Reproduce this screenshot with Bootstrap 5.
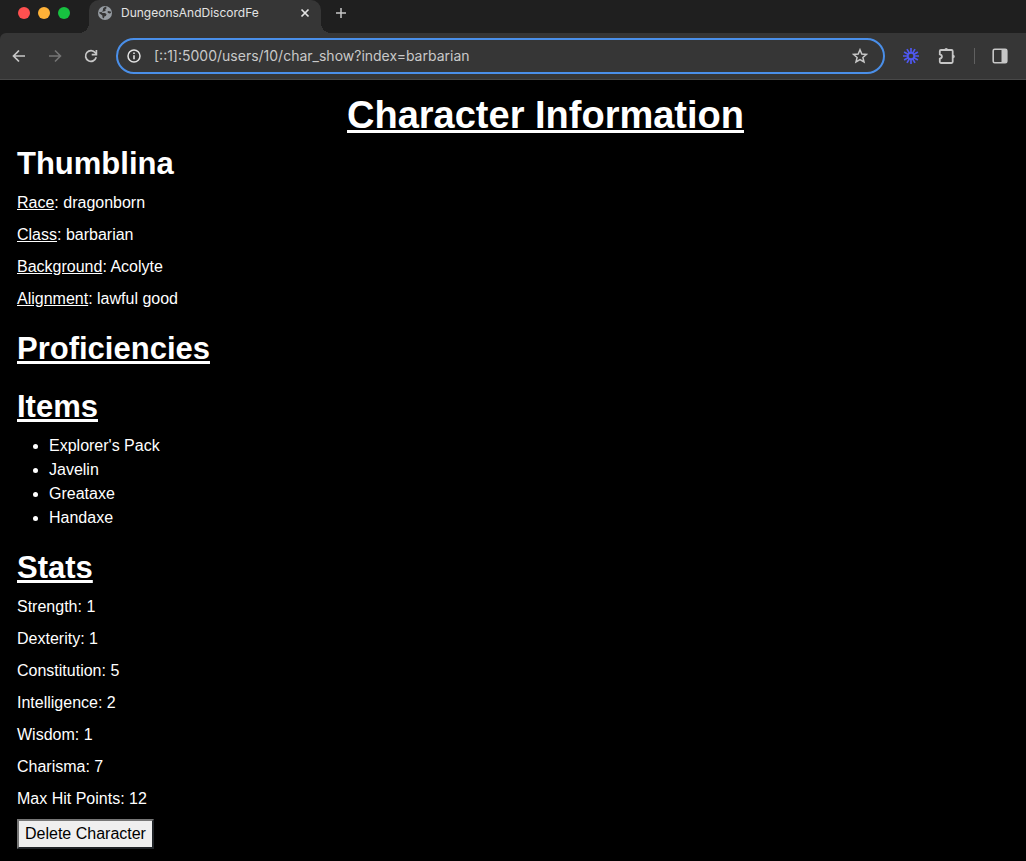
<!DOCTYPE html>
<html lang="en">
<head>
<meta charset="utf-8">
<meta name="viewport" content="width=device-width, initial-scale=1">
<title>DungeonsAndDiscordFe</title>
<link href="https://cdn.jsdelivr.net/npm/bootstrap@5.3.0/dist/css/bootstrap.min.css" rel="stylesheet">
<style>
  body { background: #000; color: #fff; font-family: "Liberation Sans", Arial, sans-serif; font-size: 16px; line-height: 24px; }
  .browser { background: #1f1f1f; font-family: Inter, sans-serif; color: #c7c7c7; }
  .browser svg { display: block; flex: none; }
  .browser button { background: none; border: 0; padding: 0; color: inherit; }
  .browser button:disabled { color: #757575; }
  .tab-strip { height: 33px; }
  .window-dots { width: 89px; height: 26px; padding-left: 18px; gap: 8px; }
  .window-dots button { width: 12px; height: 12px; border-radius: 50%; }
  .window-dots .dot-close { background: #ff5050; }
  .window-dots .dot-min { background: #ffb238; }
  .window-dots .dot-max { background: #17c140; }
  .page-tab { width: 232px; height: 33px; padding: 0 10px 7px 8px; background: #363636; border-radius: 10px 10px 0 0; color: #e3e3e3; font-size: 12px; line-height: 16px; }
  .page-tab::before, .page-tab::after { content: ""; position: absolute; bottom: 0; width: 10px; height: 10px; }
  .page-tab::before { right: 100%; background: radial-gradient(circle at 0 0, transparent 10px, #363636 10px); }
  .page-tab::after { left: 100%; background: radial-gradient(circle at 100% 0, transparent 10px, #363636 10px); }
  .new-tab { height: 26px; margin-left: 13px; }
  .toolbar { height: 47px; background: #363636; border-bottom: 1px solid #484848; border-radius: 6px 0 0 0; padding: 0 18px 0 11px; }
  .nav-buttons { width: 105px; gap: 20px; }
  .address { height: 36px; border: 2px solid #4a8fe9; border-radius: 18px; padding: 0 15px 0 8px; gap: 12px; }
  .address input { background: none; border: 0; outline: 0; padding: 0; color: #c9c9c9; font-size: 14px; line-height: 20px; }
  .toolbar-actions { margin-left: 17px; gap: 17px; }
  .tool-rule { width: 1px; height: 16px; background: #606060; }
  .sheet { padding: 11px 17px 12px; }
  .sheet h1 { font-size: 38px; line-height: 48px; margin: 0 0 6px; padding-left: 65px; }
  .sheet h2 { font-size: 31px; line-height: 38px; margin: 0 0 8px; }
  .sheet p { margin: 0 0 8px; }
  .sheet section { margin-bottom: 19px; }
  .sheet ul { padding-left: 32px; margin: 0; }
  .delete-btn { background: #efefef; color: #000; border: 2px solid; border-color: #767676 #212529 #212529 #767676; border-radius: 0; padding: 1px 6px; line-height: 24px; }
</style>
</head>
<body>
<header class="browser">
  <div class="tab-strip d-flex">
    <div class="window-dots d-flex align-items-center">
      <button class="dot-close" aria-label="Close window"></button>
      <button class="dot-min" aria-label="Minimise window"></button>
      <button class="dot-max" aria-label="Zoom window"></button>
    </div>
    <div class="page-tab position-relative d-flex align-items-center">
      <svg width="16" height="16" viewBox="0 0 16 16" aria-hidden="true"><circle cx="8" cy="8" r="7" fill="#969ca2"/><path d="M8.500 1.500 9.800 3 8.300 4.300 8.800 5.600 7 6.600H5.300L5 8H8L9.600 9.200 8.800 11 7.300 11.400 7 13.600 5.400 12.600V10.400L2.300 8.300 2.500 7 4.500 7.200 5.800 5.400 6.200 3.200zM10.800 6 13.800 6.500 14 8 12.200 8.400 10.600 7.400z" fill="#363636"/></svg>
      <span class="ms-2 me-auto">DungeonsAndDiscordFe</span>
      <button aria-label="Close tab"><svg width="12" height="12" viewBox="0 0 12 12" fill="none" stroke="currentColor" stroke-width="1.7"><path d="M2.5 2.5l7 7M9.5 2.5l-7 7"/></svg></button>
    </div>
    <button class="new-tab" aria-label="New tab"><svg width="14" height="14" viewBox="0 0 14 14" fill="none" stroke="currentColor" stroke-width="1.5"><path d="M7 2v10M2 7h10"/></svg></button>
  </div>
  <div class="toolbar d-flex align-items-center">
    <div class="nav-buttons d-flex align-items-center">
      <button aria-label="Back"><svg width="16" height="16" viewBox="0 0 16 16" fill="none" stroke="currentColor" stroke-width="1.7"><path d="M14 8H3M8 2.5 2.5 8 8 13.500"/></svg></button>
      <button aria-label="Forward" disabled><svg width="16" height="16" viewBox="0 0 16 16" fill="none" stroke="currentColor" stroke-width="1.6"><path d="M2 8h11M8 2.500 13.500 8 8 13.500"/></svg></button>
      <button aria-label="Reload"><svg width="16" height="16" viewBox="0 0 16 16" fill="none" stroke="currentColor" stroke-width="1.7"><path d="M13.200 9.300A5.400 5.400 0 1 1 12.300 4.700L13.500 6"/><path d="M13.400 2v4.700H8.700" /></svg></button>
    </div>
    <div class="address d-flex align-items-center flex-grow-1">
      <svg width="16" height="16" viewBox="0 0 16 16" aria-hidden="true"><circle cx="8" cy="8" r="6" fill="none" stroke="#e3e3e3" stroke-width="1.500"/><path d="M7.200 7.200h1.600v4H7.200zM7.200 4.500h1.600v1.600H7.200z" fill="#e3e3e3"/></svg>
      <input class="flex-grow-1" type="text" aria-label="Address" value="[::1]:5000/users/10/char_show?index=barbarian">
      <button aria-label="Bookmark"><svg width="16" height="16" viewBox="0 0 16 16" fill="none" stroke="currentColor" stroke-width="1.500"><path d="M8 1.700 9.800 6 14.500 6.400 10.900 9.500 12 14 8 11.600 4 14 5.100 9.500 1.500 6.400 6.200 6z"/></svg></button>
    </div>
    <div class="toolbar-actions d-flex align-items-center">
      <button aria-label="Loom"><svg width="18" height="18" viewBox="0 0 18 18" fill="none" stroke="#4f58f0" stroke-width="1.700"><circle cx="9" cy="9" r="3.200"/><path d="M9 1v5M9 12v5M1 9h5M12 9h5M5 2.100l2.500 4.300M10.500 11.600l2.500 4.300M2.100 5l4.300 2.500M11.600 10.500l4.300 2.500M13 2.100l-2.500 4.300M7.500 11.600 5 15.900M15.900 5l-4.300 2.500M6.400 10.500 2.100 13"/></svg></button>
      <button aria-label="Extensions"><svg width="20" height="18" viewBox="0 0 20 18" fill="none" stroke="currentColor" stroke-width="1.800"><path d="M4 3H14.500A1.200 1.200 0 0 1 15.700 4.200V14.800A1.200 1.200 0 0 1 14.500 16H4A1.200 1.200 0 0 1 2.800 14.800V11.700C5.600 11.200 5.600 7.800 2.800 7.300V4.200A1.200 1.200 0 0 1 4 3z"/><path d="M7.400 2.800a1.800 1.800 0 0 1 3.600 0zM16 7.700a1.800 1.800 0 0 1 0 3.600z" fill="currentColor" stroke="none"/></svg></button>
      <span class="tool-rule"></span>
      <button aria-label="Side panel"><svg width="16" height="16" viewBox="0 0 16 16"><rect x="1.200" y="1.200" width="13.600" height="13.600" rx="1.500" fill="none" stroke="currentColor" stroke-width="1.600"/><path d="M9.500 1H14.500V15H9.500z" fill="currentColor"/></svg></button>
    </div>
  </div>
</header>
<main class="sheet">
  <h1 class="text-center text-decoration-underline fw-bold">Character Information</h1>
  <section>
    <h2 class="fw-bold">Thumblina</h2>
    <p><u>Race</u>: dragonborn</p>
    <p><u>Class</u>: barbarian</p>
    <p><u>Background</u>: Acolyte</p>
    <p class="mb-0"><u>Alignment</u>: lawful good</p>
  </section>
  <h2 class="fw-bold text-decoration-underline mb-0">Proficiencies</h2>
  <section class="mt-3 pt-1">
    <h2 class="fw-bold text-decoration-underline">Items</h2>
    <ul>
      <li>Explorer's Pack</li>
      <li>Javelin</li>
      <li>Greataxe</li>
      <li>Handaxe</li>
    </ul>
  </section>
  <h2 class="fw-bold text-decoration-underline">Stats</h2>
  <p>Strength: 1</p>
  <p>Dexterity: 1</p>
  <p>Constitution: 5</p>
  <p>Intelligence: 2</p>
  <p>Wisdom: 1</p>
  <p>Charisma: 7</p>
  <p>Max Hit Points: 12</p>
  <button class="delete-btn d-block">Delete Character</button>
</main>
<script src="https://cdn.jsdelivr.net/npm/bootstrap@5.3.0/dist/js/bootstrap.bundle.min.js"></script>
</body>
</html>
